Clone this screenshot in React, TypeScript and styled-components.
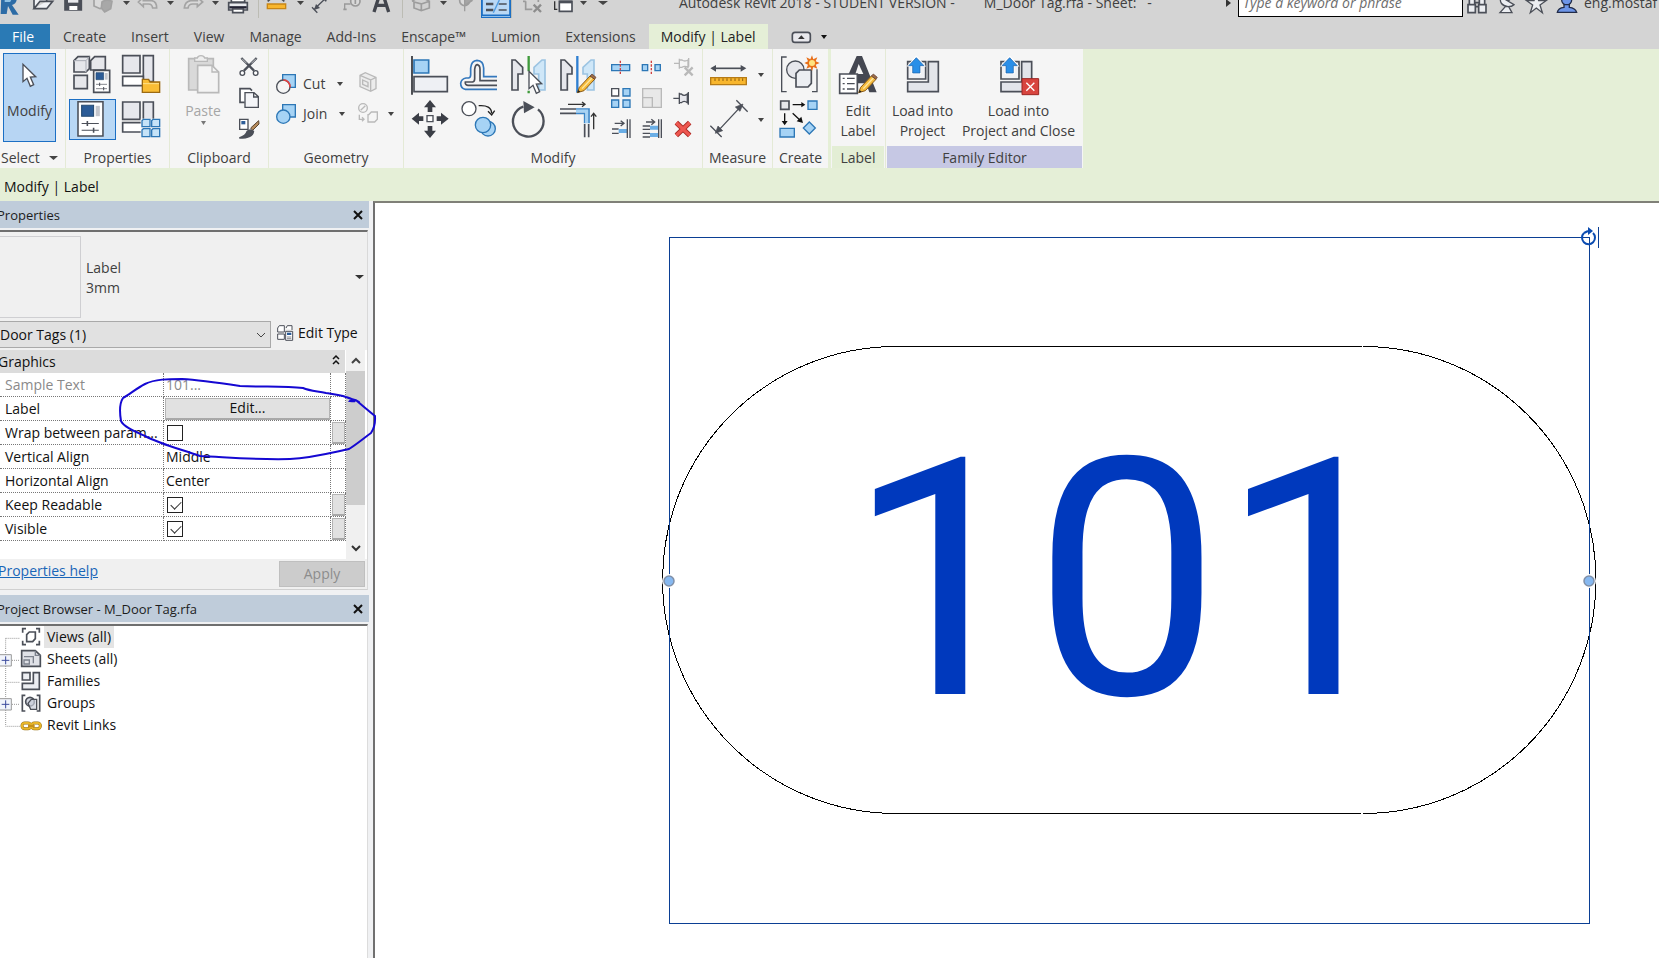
import React from "react";
import styled, { createGlobalStyle, css } from "styled-components";

const GlobalStyle = createGlobalStyle`
  * { box-sizing: border-box; }
  html, body { margin: 0; padding: 0; }
  body {
    font-family: "Open Sans", "Noto Sans", sans-serif;
    font-size: 14px;
    line-height: 20px;
    color: #404040;
    background: #f0f0f0;
    overflow: hidden;
  }
  button, input, select { font: inherit; color: inherit; margin: 0; }
`;

/* ---------- palette ---------- */
const green = "#e5efd7";
const ink = "#4b4f58";
const sky = "#a6d3f5";
const skyLine = "#2d77b6";
const pale = "#f2f3f6";
const faded = "#b9b9b9";

/* ---------- shell ---------- */
const Shell = styled.div`
  display: flex;
  flex-direction: column;
  height: 100vh;
  overflow: hidden;
`;

const TitleBar = styled.header`
  display: flex;
  height: 24px;
  background: #d4d4d4;
  overflow: hidden;
`;

const TitleRow = styled.div`
  display: flex;
  flex: 1;
  min-width: 0;
  height: 30px;
  margin-top: -12px;
  align-items: center;
`;

const TitleText = styled.h1`
  flex: 1;
  margin: 0;
  padding-left: 63px;
  font-size: 14px;
  font-weight: 400;
  white-space: pre;
  overflow: hidden;
`;

const Divider = styled.span`
  width: 1px;
  height: 30px;
  background: #bcbcb4;
`;

const SearchBox = styled.input`
  width: 225px;
  height: 29px;
  padding: 0 4px;
  border: 1px solid #000;
  background: #fff;
  font-style: italic;
  align-self: flex-start;
  &::placeholder { color: #6d6d6d; opacity: 1; }
`;

const UserName = styled.button`
  width: 76px;
  border: 0;
  padding: 0 0 0 1px;
  background: none;
  text-align: left;
  white-space: nowrap;
`;

const Tool = styled.button<{ $active?: boolean; $w?: number }>`
  display: flex;
  align-items: center;
  justify-content: center;
  border: 0;
  padding: 0;
  background: none;
  flex: none;
  ${(p) => p.$w && css`width: ${p.$w}px;`}
  ${(p) => p.$active && css`
    background: #b9d8f5;
    box-shadow: inset 0 0 0 1px #1c6fc4;
  `}
  svg { display: block; }
`;

const TabRow = styled.nav`
  display: flex;
  align-items: stretch;
  gap: 1px;
  height: 25px;
  background: #d4d4d4;
`;

const Tab = styled.button<{ $kind?: "file" | "active" }>`
  border: 0;
  padding: 0 12px;
  background: none;
  line-height: 24px;
  white-space: nowrap;
  ${(p) => p.$kind === "file" && css`
    width: 50px;
    padding: 0 4px 0 0;
    background: #2a7ab5;
    color: #fff;
  `}
  ${(p) => p.$kind === "active" && css`
    margin-right: 20px;
    background: ${green};
    color: #222;
  `}
`;

/* ---------- ribbon ---------- */
const Ribbon = styled.section`
  display: flex;
  height: 119px;
  background: ${green};
`;

const Panel = styled.div<{ $w: number; $first?: boolean; $gap?: number }>`
  display: flex;
  flex-direction: column;
  flex: none;
  width: ${(p) => p.$w}px;
  margin-left: ${(p) => p.$gap ?? 0}px;
  background: #f5f5f5;
  border-left: ${(p) => (p.$first ? "0" : "1px solid #e4ead6")};
`;

const PanelBody = styled.div<{ $pad?: number }>`
  display: flex;
  align-items: flex-start;
  gap: 4px;
  height: 97px;
  padding: 4px 0 0 ${(p) => p.$pad ?? 0}px;
`;

const PanelTitle = styled.div<{ $bg?: string; $start?: boolean }>`
  display: flex;
  align-items: center;
  justify-content: ${(p) => (p.$start ? "flex-start" : "center")};
  gap: 9px;
  height: 22px;
  margin: 0 1px;
  padding-top: 2px;
  background: ${(p) => p.$bg ?? "transparent"};
  white-space: nowrap;
`;

const ToolGrid = styled.div<{ $cols: string; $rows: string; $gap?: number }>`
  display: grid;
  grid-template-columns: ${(p) => p.$cols};
  grid-template-rows: ${(p) => p.$rows};
  gap: ${(p) => p.$gap ?? 0}px;
`;

const JoinedGrids = styled.div`
  display: flex;
`;

const BigButton = styled.button<{ $w: number; $active?: boolean; $faded?: boolean }>`
  display: flex;
  flex-direction: column;
  align-items: center;
  width: ${(p) => p.$w}px;
  height: 89px;
  flex: none;
  border: 0;
  padding: 0;
  background: ${(p) => (p.$active ? "#b7d5f3" : "none")};
  box-shadow: ${(p) => (p.$active ? "inset 0 0 0 1px #1c6fc4" : "none")};
  color: ${(p) => (p.$faded ? "#a6a6a6" : "inherit")};
  white-space: nowrap;
  text-align: center;
  svg { display: block; flex: none; }
  span { margin-top: 4px; }
`;

const GeometryRows = styled.div`
  padding-top: 16px;
`;

const GeometryRow = styled.div`
  display: grid;
  grid-template-columns: 81px 30px 15px;
  height: 30px;
`;

const TextTool = styled.button`
  display: flex;
  align-items: center;
  border: 0;
  padding: 0;
  background: none;
  svg:last-child { margin-left: 12px; }
  span { margin-left: 3px; }
`;

const OptionsBar = styled.div`
  height: 33px;
  padding: 9px 0 0 4px;
  background: ${green};
  color: #111;
`;

/* ---------- workspace ---------- */
const Workspace = styled.main`
  position: relative;
  display: flex;
  flex: 1;
  min-height: 0;
`;

const Side = styled.aside`
  display: flex;
  flex-direction: column;
  flex: none;
  width: 373px;
  padding-right: 4px;
  background: #f0f1f3;
`;

const DockHeader = styled.div`
  display: flex;
  align-items: center;
  justify-content: space-between;
  height: 27px;
  margin-bottom: 2px;
  padding-right: 5px;
  background: #bfccda;
  color: #1c1c1c;
  flex: none;
  h2 {
    margin: 0 0 0 -3px;
    font-size: 13px;
    font-weight: 400;
  }
`;

const PropertyDock = styled.section`
  display: flex;
  flex-direction: column;
  border-top: 2px solid #6f6f6f;
  border-right: 1px solid #d9d9d9;
  border-bottom: 1px solid #d0d0d0;
  background: #f0f0f0;
  margin-right: 1px;
  height: 360px;
  flex: none;
`;

const TypeRow = styled.div`
  display: flex;
  align-items: center;
  height: 87px;
  padding: 2px 3px 0 0;
`;

const Thumb = styled.div`
  width: 81px;
  height: 82px;
  border: 1px solid #cfcfd2;
  border-left: 0;
`;

const TypeName = styled.div`
  flex: 1;
  padding: 2px 0 0 5px;
`;

const FilterRow = styled.div`
  display: flex;
  align-items: center;
  height: 31px;
`;

const SelectWrap = styled.div`
  position: relative;
  width: 271px;
  svg { position: absolute; right: 4px; top: 8px; pointer-events: none; }
`;

const Filter = styled.select`
  appearance: none;
  width: 100%;
  height: 27px;
  padding: 0 0 0 0;
  border: 1px solid #a9a9a9;
  border-left: 0;
  border-radius: 0;
  background: #e1e1e1;
  color: #111;
`;

const EditType = styled.button`
  display: flex;
  align-items: center;
  gap: 4px;
  border: 0;
  padding: 0 0 4px 5px;
  background: none;
  color: #111;
  white-space: nowrap;
`;

const GridArea = styled.div`
  display: flex;
  height: 209px;
  background: #fff;
`;

const PropColumn = styled.div`
  flex: 1;
  min-width: 0;
`;

const GroupHeader = styled.div`
  display: flex;
  align-items: center;
  justify-content: space-between;
  height: 23px;
  padding-right: 5px;
  margin-right: 1px;
  background: #dcdcdc;
  color: #111;
  span { margin-left: -2px; }
`;

const PropTable = styled.table`
  width: 346px;
  table-layout: fixed;
  border-collapse: separate;
  border-spacing: 0;
  color: #111;
  th, td {
    height: 24px;
    padding: 0;
    border-bottom: 1px dotted #777;
    border-right: 1px dotted #777;
    font-weight: 400;
    text-align: left;
    line-height: 20px;
    white-space: nowrap;
    overflow: hidden;
  }
  th { width: 164px; padding-left: 5px; }
  td:last-child { width: 15px; padding: 1px 0 0 1px; }
`;

const Value = styled.td<{ $faded?: boolean }>`
  && { padding-left: 2px; }
  color: ${(p) => (p.$faded ? "#8a8a8a" : "inherit")};
`;

const NameCell = styled.th<{ $faded?: boolean }>`
  color: ${(p) => (p.$faded ? "#8a8a8a" : "inherit")};
`;

const FieldButton = styled.button<{ $wide?: boolean }>`
  display: block;
  width: ${(p) => (p.$wide ? "165px" : "13px")};
  height: 22px;
  margin-left: ${(p) => (p.$wide ? "-1px" : "0")};
  border: 1px solid #b4b4b4;
  border-bottom: 2px solid #a8a8a8;
  padding: 0;
  line-height: 18px;
  background: #e1e1e1;
`;

const Check = styled.input`
  appearance: none;
  display: block;
  width: 16px;
  height: 16px;
  margin-left: 1px;
  border: 1px solid #222;
  background: #fff;
  &:checked::after {
    content: "";
    display: block;
    width: 9px;
    height: 5px;
    margin: 3px 0 0 3px;
    border: solid #333;
    border-width: 0 0 1px 1px;
    transform: rotate(-45deg);
  }
`;

const ScrollTrack = styled.div`
  display: flex;
  flex-direction: column;
  align-items: center;
  width: 19px;
  margin-right: 2px;
  background: #f0f0f0;
`;

const ScrollThumb = styled.div`
  width: 100%;
  height: 134px;
  background: #cdcdcd;
  margin-bottom: auto;
`;

const Footer = styled.div`
  display: flex;
  justify-content: space-between;
  align-items: flex-start;
  padding: 2px 2px 0 0;
  a { margin-left: -2px; color: #1a66b8; }
`;

const Apply = styled.button`
  width: 86px;
  height: 26px;
  border: 1px solid #bfbfbf;
  padding: 0;
  background: #cccccc;
  color: #8c8c8c;
`;

const Tree = styled.ul`
  flex: 1;
  margin: 0 1px 0 0;
  padding: 0;
  border-top: 2px solid #6f6f6f;
  border-right: 1px solid #dcdcdc;
  background: #fff;
  list-style: none;
  color: #111;
`;

const TreeItem = styled.li<{ $selected?: boolean }>`
  display: flex;
  height: 22px;
  line-height: 22px;
  span {
    padding: 0 3px;
    background: ${(p) => (p.$selected ? "#e4e4e4" : "none")};
  }
`;

const Canvas = styled.section`
  flex: 1;
  min-width: 0;
  border-left: 2px solid #707070;
  border-top: 2px solid #808078;
  background: #fff;
  svg { display: block; width: 100%; height: 100%; }
`;

/* hand-drawn mark laid over the property grid */
const InkMark = styled.svg`
  position: absolute;
  left: 116px;
  top: 173px;
  pointer-events: none;
`;

/* ---------- small drawings ---------- */
function Glyph({ w, h, box, children }: { w: number; h: number; box: string; children: React.ReactNode }) {
  return (
    <svg width={w} height={h} viewBox={box} fill="none" stroke={ink} strokeWidth={5} aria-hidden="true">
      {children}
    </svg>
  );
}

function Arrow({ w = 7, color = "#444" }: { w?: number; color?: string }) {
  return (
    <svg width={w} height={4} viewBox="0 0 8 4" preserveAspectRatio="none" aria-hidden="true">
      <path d="M0 0H8L4 4Z" fill={color} />
    </svg>
  );
}

function Close() {
  return (
    <svg width="12" height="12" viewBox="0 0 12 12" aria-hidden="true">
      <path d="M2 2L10 10M10 2L2 10" stroke="#111" strokeWidth="2" fill="none" />
    </svg>
  );
}

function QuickIcon({ label, x, w, active, children }: { label: string; x: number; w: number; active?: boolean; children: React.ReactNode }) {
  return (
    <Tool aria-label={label} $w={w} $active={active}>
      <Glyph w={w} h={30} box={`${x} -36 ${w * 3} 90`}>{children}</Glyph>
    </Tool>
  );
}

function QuickArrow({ w, label }: { w: number; label: string }) {
  return (
    <Tool aria-label={label} $w={w}><Arrow /></Tool>
  );
}

function QuickAccess() {
  return (
    <>
      <QuickIcon label="Application menu" x={0} w={26}>
        <path d="M4 -20H36Q52 -18 50 0Q48 12 36 15L56 44H38L24 18L20 42H2Z" fill="#2d6ca6" stroke="none" />
        <path d="M14 -6H32Q36 0 30 6H14Z" fill="#8fc1e4" stroke="none" />
      </QuickIcon>
      <QuickIcon label="Open" x={78} w={32}>
        <path d="M102 26V-8H140V4M102 26H140L158 4H120Z" fill={pale} />
      </QuickIcon>
      <QuickIcon label="Save" x={174} w={30}>
        <path d="M195 -15H244V30H195Z" fill={ink} />
        <path d="M204 -12H235V8H204Z" fill="#e9eaee" stroke="none" />
        <path d="M208 18H232V30H208Z" fill="#fff" stroke="none" />
      </QuickIcon>
      <QuickIcon label="Synchronize" x={264} w={31}>
        <g stroke="#a2a2a2" fill="#dadada">
          <path d="M282 -14H316V22L300 26L282 18Z" />
          <path d="M306 6Q320 -4 336 4L332 26L314 36L304 24Z" fill="#a8a8a8" />
        </g>
      </QuickIcon>
      <QuickArrow w={14} label="Synchronize options" />
      <QuickIcon label="Undo" x={399} w={30}>
        <path d="M415 6L430 -8V2H455Q470 4 470 24H458Q456 12 446 12H430V20Z" stroke="#a4a4a4" fill="#d9d9d9" />
      </QuickIcon>
      <QuickArrow w={15} label="Undo history" />
      <QuickIcon label="Redo" x={534} w={30}>
        <path d="M608 6L592 -8V2H572Q555 4 553 24H564Q566 12 578 12H592V20Z" stroke="#a4a4a4" fill="#d9d9d9" />
      </QuickIcon>
      <QuickArrow w={14} label="Redo history" />
      <QuickIcon label="Print" x={666} w={36}>
        <path d="M686 8H742V30H686Z" fill="#e8eaee" />
        <path d="M694 -12H734V6H694Z" fill="#fff" />
        <path d="M698 27H730V38H698Z" fill="#fff" />
        <path d="M688 22H740" stroke="#223" strokeWidth={7} />
      </QuickIcon>
      <Divider />
      <QuickIcon label="Measure" x={777} w={34}>
        <path d="M802 -2H854" strokeWidth={4} />
        <path d="M803 -8L810 -2L803 4M853 -8L846 -2L853 4" />
        <path d="M802 12H857V26H802Z" fill="#f8b62d" stroke="#c88617" strokeWidth={4} />
      </QuickIcon>
      <QuickArrow w={14} label="Measure options" />
      <QuickIcon label="Aligned dimension" x={921} w={27}>
        <path d="M944 26L980 -8M936 22L952 38" strokeWidth={4} />
        <path d="M942 30L960 24L948 12ZM984 -10L968 -4L978 6Z" fill={ink} stroke="none" />
      </QuickIcon>
      <QuickIcon label="Tag" x={1002} w={32}>
        <path d="M1034 28V12H1052" stroke="#999" strokeWidth={4} />
        <circle cx="1066" cy="4" r="14" stroke="#999" fill="#d9d9d9" />
        <path d="M1066 -4V12M1030 28H1040" stroke="#999" />
      </QuickIcon>
      <QuickIcon label="Text" x={1098} w={36}>
        <path d="M1122 36L1140 -20H1148L1166 36M1130 16H1158" strokeWidth={10} stroke="#42454d" />
      </QuickIcon>
      <Divider />
      <QuickIcon label="3D view" x={9} w={33}>
        <path d="M36 4L60 -12L88 4V24L64 32L42 24V6L64 12V32M64 12L88 4" stroke="#9d9d9d" fill="#d0d0d0" />
      </QuickIcon>
      <QuickArrow w={15} label="3D options" />
      <QuickIcon label="Section" x={153} w={30}>
        <circle cx="194" cy="2" r="15" stroke="#9d9d9d" fill="#dadada" />
        <path d="M194 -12L216 2L194 16ZM194 16V34" stroke="#9d9d9d" fill="#a5a5a5" strokeWidth={4} />
      </QuickIcon>
      <QuickIcon label="Thin lines" x={243} w={30} active>
        <path d="M258 12H280M258 30H280" strokeWidth={7} />
        <path d="M296 12H320M296 30H320" strokeWidth={4} />
        <path d="M280 38L298 0" stroke="#4e9be0" strokeWidth={4} />
        <path d="M246 -30H330V46H246Z" stroke="#1c6fc4" />
      </QuickIcon>
      <Divider />
      <QuickIcon label="Close hidden windows" x={345} w={32}>
        <path d="M386 -4H424V6M386 4V28H406M378 4H386" stroke="#9a9a9a" />
        <path d="M410 14L432 36M432 14L410 36" stroke="#8d8d8d" strokeWidth={7} />
      </QuickIcon>
      <QuickIcon label="Switch windows" x={438} w={32}>
        <path d="M484 4H522V34H484Z" fill="#fff" />
        <path d="M484 6H522" strokeWidth={8} />
        <path d="M470 4V28H478M474 -8H516" stroke="#333" strokeWidth={4} />
      </QuickIcon>
      <QuickArrow w={14} label="Window list" />
      <Tool aria-label="Customize toolbar" $w={26}><Arrow w={10} /></Tool>
    </>
  );
}

function SearchIcons() {
  return (
    <>
      <QuickIcon label="Search" x={849} w={33}>
        <path d="M864 14H886V38H864ZM896 14H918V38H896ZM868 14V-8H884V14M898 14V-8H914V14M886 8H896M886 20H896" fill="#eceef2" />
      </QuickIcon>
      <QuickIcon label="Communication center" x={948} w={27}>
        <path d="M962 -10Q956 16 984 20Q996 20 1002 14ZM976 20L960 38H996L986 20M984 4L998 -10" fill="#eceef2" strokeWidth={4} />
      </QuickIcon>
      <QuickIcon label="Favorites" x={1029} w={28}>
        <path d="M1069 -20L1076 2H1098L1080 15L1087 38L1069 24L1051 38L1058 15L1040 2H1062Z" fill="#eceef2" strokeWidth={4} />
      </QuickIcon>
      <QuickIcon label="Sign in" x={1113} w={32}>
        <circle cx="1160" cy="0" r="15" fill="#6d95e8" strokeWidth={4} stroke="#222c48" />
        <path d="M1132 37Q1134 24 1152 22V14H1168V22Q1186 24 1190 37Z" fill="#6d95e8" strokeWidth={4} stroke="#222c48" />
      </QuickIcon>
    </>
  );
}

/* pieces shared by several ribbon icons */
const PropertyCard = ({ x, y, s = 1 }: { x: number; y: number; s?: number }) => (
  <g transform={`translate(${x} ${y}) scale(${s})`}>
    <path d="M0 0H48V66H0Z" fill="#fff" strokeWidth={s > 1 ? 3 : 5} />
    <path d="M7 7H30V28H7Z" fill="#2c5c97" stroke="#24496f" strokeWidth={2} />
    <path d="M34 8H42V28H34Z" fill="#c4c6cc" stroke="none" />
    <path d="M7 42H40M7 55H40" strokeWidth={2} />
    <path d="M18 37V47M30 50V60" strokeWidth={3} />
  </g>
);

const FamilyBlocks = ({ x, y }: { x: number; y: number }) => (
  <g transform={`translate(${x} ${y})`} fill="#e6e7ec">
    <path d="M0 0H52V52H0Z" />
    <path d="M62 0H92V78H62Z" />
    <path d="M0 62H62V90H0Z" fill="#fff" />
  </g>
);

const Pencil = ({ x, y }: { x: number; y: number }) => (
  <g transform={`translate(${x} ${y})`}>
    <path d="M0 54L6 38L38 4L52 14L20 48Z" fill="#f6bb3c" stroke="#8a5a18" strokeWidth={3} />
    <path d="M38 4L44 -2L56 8L52 14Z" fill="#9b6b4a" stroke="#5b3a2a" strokeWidth={2} />
    <path d="M0 54L3 46L9 51Z" fill="#222" stroke="none" />
    <path d="M14 42L44 10" stroke="#fde7a3" strokeWidth={4} />
  </g>
);

const Cursor = ({ x, y }: { x: number; y: number }) => (
  <path transform={`translate(${x} ${y})`} d="M0 0V52L12 42L22 66L32 61L22 38L38 37Z" fill="#fff" strokeWidth={4} />
);

function SelectPanel() {
  return (
    <Panel $w={65} $first>
      <PanelBody $pad={3}>
        <BigButton $w={53} $active>
          <Glyph w={53} h={44} box="9 159 159 132"><Cursor x={69} y={193} /></Glyph>
          <span>Modify</span>
        </BigButton>
      </PanelBody>
      <PanelTitle $start>Select <Arrow w={9} /></PanelTitle>
    </Panel>
  );
}

function PropertiesPanel() {
  return (
    <Panel $w={104}>
      <PanelBody $pad={3}>
        <ToolGrid $cols="47px 47px" $rows="44px 41px" $gap={2}>
          <Tool aria-label="Type properties">
            <Glyph w={47} h={44} box="207 159 141 132">
              <g fill="#e6e7eb">
                <path d="M222 182L234 170H268V206L258 216H222Z" />
                <path d="M222 182H258V216M258 182L268 170" strokeWidth={3} stroke="#a9acb5" />
                <path d="M272 182L284 170H316V210H272Z" />
                <path d="M222 226H262V266H222Z" />
              </g>
              <PropertyCard x={281} y={211} />
            </Glyph>
          </Tool>
          <Tool aria-label="Family category and parameters">
            <Glyph w={47} h={44} box="354 159 141 132">
              <FamilyBlocks x={368} y={167} />
              <path d="M427 238H446L450 246H479V277H427Z" fill="#f9bd35" stroke="#9b6a12" strokeWidth={4} />
              <path d="M429 251H477" stroke="#fde08a" strokeWidth={3} />
            </Glyph>
          </Tool>
          <Tool aria-label="Properties" $active>
            <Glyph w={47} h={41} box="207 297 141 123"><PropertyCard x={234} y={305} s={1.56} /></Glyph>
          </Tool>
          <Tool aria-label="Family types">
            <Glyph w={47} h={41} box="354 297 141 123">
              <FamilyBlocks x={368} y={306} />
              <path d="M422 356H482V416H422Z" fill="#f5f5f5" stroke="none" />
              <g fill="#c5e3f8" stroke={skyLine} strokeWidth={4}>
                <path d="M426 362L430 358H450V380H426ZM455 362L459 358H479V380H455ZM426 390L430 386H450V410H426ZM455 390L459 386H479V410H455Z" />
              </g>
            </Glyph>
          </Tool>
        </ToolGrid>
      </PanelBody>
      <PanelTitle>Properties</PanelTitle>
    </Panel>
  );
}

function ClipboardPanel() {
  return (
    <Panel $w={99}>
      <PanelBody $pad={6}>
        <BigButton $w={54} $faded>
          <Glyph w={54} h={44} box="528 159 162 132">
            <g stroke={faded}>
              <path d="M566 176H640V270H566Z" fill="#d9d9d9" />
              <path d="M584 184V174H592Q594 167 603 167Q612 167 614 174H622V184Z" fill="#eee" strokeWidth={4} />
              <path d="M593 196H636L656 216V278H593Z" fill="#f4f4f4" />
              <path d="M636 196V216H656" strokeWidth={4} />
            </g>
          </Glyph>
          <span>Paste</span>
          <Arrow w={5} color="#777" />
        </BigButton>
        <ToolGrid $cols="30px" $rows="30px 30px 30px">
          <Tool aria-label="Cut to clipboard">
            <Glyph w={30} h={30} box="702 159 90 90">
              <path d="M724 174L762 212M770 174L732 212" strokeWidth={7} />
              <circle cx="727" cy="219" r="7" fill="#fff" strokeWidth={4} />
              <circle cx="767" cy="219" r="7" fill="#fff" strokeWidth={4} />
              <path d="M726 176L740 190M768 176L754 190" stroke="#fff" strokeWidth={2} />
            </Glyph>
          </Tool>
          <Tool aria-label="Copy to clipboard">
            <Glyph w={30} h={30} box="702 249 90 90">
              <path d="M734 307H720V266H750L756 272" fill="#fff" />
              <path d="M735 278H762L775 290V322H735ZM761 278V291H775" fill="#f4f5f8" strokeWidth={4} />
            </Glyph>
          </Tool>
          <Tool aria-label="Match type properties">
            <Glyph w={30} h={30} box="702 339 90 90">
              <path d="M719 358H744V388H719Z" fill="#fff" strokeWidth={4} />
              <path d="M724 363H736V373H724Z" fill="#2c5c97" stroke="none" />
              <path d="M776 362L752 384L758 391L777 372Z" fill="#b58a5a" stroke="#5a4430" strokeWidth={3} />
              <path d="M718 414Q738 408 742 394Q750 386 760 394Q758 414 718 414Z" fill={ink} />
            </Glyph>
          </Tool>
        </ToolGrid>
      </PanelBody>
      <PanelTitle>Clipboard</PanelTitle>
    </Panel>
  );
}

function GeometryPanel() {
  return (
    <Panel $w={135}>
      <PanelBody $pad={3}>
        <GeometryRows>
          <GeometryRow>
            <TextTool>
              <Glyph w={28} h={30} box="816 207 84 90">
                <path d="M848 224H886V262H848Z" fill={sky} stroke={skyLine} strokeWidth={4} />
                <circle cx="850" cy="260" r="20" fill="#f5f5f5" strokeWidth={4} />
                <path d="M850 240A20 20 0 0 1 870 262" stroke="#e04343" strokeWidth={5} />
              </Glyph>
              <span>Cut</span>
              <Arrow w={6} />
            </TextTool>
            <Tool aria-label="Cope">
              <Glyph w={30} h={30} box="1059 207 90 90">
                <path d="M1080 226L1096 218L1128 232V266L1112 274L1080 260ZM1080 226L1112 240V274M1112 240L1128 232" stroke={faded} fill="#ececec" strokeWidth={4} />
                <path d="M1088 240L1104 247V260L1088 253Z" stroke={faded} strokeWidth={4} />
              </Glyph>
            </Tool>
          </GeometryRow>
          <GeometryRow>
            <TextTool>
              <Glyph w={28} h={30} box="816 297 84 90">
                <path d="M848 314H886V351H848Z" fill={sky} stroke={skyLine} strokeWidth={4} />
                <circle cx="850" cy="350" r="20" fill={sky} stroke={skyLine} strokeWidth={4} />
                <path d="M851 333V348H866" stroke={sky} strokeWidth={5} />
              </Glyph>
              <span>Join</span>
              <Arrow w={6} />
            </TextTool>
            <Tool aria-label="Split face">
              <Glyph w={30} h={30} box="1059 297 90 90">
                <g stroke={faded} strokeWidth={4}>
                  <circle cx="1089" cy="324" r="13" />
                  <path d="M1082 331L1096 317M1106 344L1114 336H1132V358L1124 366H1104V344ZM1078 344V358H1090M1086 352L1092 358L1086 364" />
                </g>
              </Glyph>
            </Tool>
            <Tool aria-label="Paint options"><Arrow w={6} /></Tool>
          </GeometryRow>
        </GeometryRows>
      </PanelBody>
      <PanelTitle>Geometry</PanelTitle>
    </Panel>
  );
}

const modifyTools: { label: string; art: React.ReactNode }[] = [
  {
    label: "Align",
    art: (
      <>
        <path d="M36 168V284" stroke="#2b2d33" />
        <path d="M42 180H86V219H42Z" fill={sky} stroke={skyLine} />
        <path d="M42 230H142V275H42Z" fill="#eef0f4" />
      </>
    ),
  },
  {
    label: "Offset",
    art: (
      <>
        <path d="M291 268H196Q182 266 182 250Q184 236 198 234H206Q212 232 212 224V204Q214 182 231 181Q250 182 251 204V230H291" stroke="#3478bd" strokeWidth={5} />
        <path d="M291 256H204Q194 254 196 246H218Q224 244 224 236V208Q226 194 232 194Q240 196 240 208V242H291" />
      </>
    ),
  },
  {
    label: "Mirror - Pick axis",
    art: (
      <>
        <path d="M336 180H346L368 202V222H354V270H336Z" fill="#e6e7ec" />
        <path d="M435 180H426L402 202V222H416V270H435Z" fill="#cfe7f8" stroke="#9cc4e2" />
        <path d="M386 168V214M386 272V280" stroke="#3f9a3b" strokeWidth={7} />
        <Cursor x={387} y={214} />
      </>
    ),
  },
  {
    label: "Mirror - Draw axis",
    art: (
      <>
        <path d="M483 180H494L516 202V222H502V270H483Z" fill="#e6e7ec" />
        <path d="M582 180H573L549 202V222H562V270H582Z" fill="#cfe7f8" stroke="#9cc4e2" />
        <path d="M532 168V278" stroke="#2f7fd1" strokeWidth={7} />
        <Pencil x={532} y={224} />
      </>
    ),
  },
  {
    label: "Move",
    art: (
      <>
        <path d="M90 300L108 322H97V336H83V322H72ZM90 414L72 392H83V378H97V392H108ZM35 356L57 338V349H70V363H57V374ZM146 356L123 338V349H110V363H123V374Z" fill="#3b3e46" stroke="none" />
        <path d="M81 347H99V365H81Z" fill="#fff" strokeWidth={4} />
      </>
    ),
  },
  {
    label: "Copy",
    art: (
      <>
        <circle cx="207" cy="326" r="21" fill="#fff" strokeWidth={4} />
        <path d="M236 317Q274 314 275 340M264 334L275 345L284 332" stroke="#222" strokeWidth={4} />
        <circle cx="264" cy="386" r="22" fill={sky} stroke={skyLine} strokeWidth={4} />
        <circle cx="249" cy="375" r="23" fill={sky} stroke={skyLine} strokeWidth={4} />
      </>
    ),
  },
  {
    label: "Rotate",
    art: (
      <>
        <path d="M414 328A46 46 0 1 1 370 320" strokeWidth={7} />
        <path d="M370 303L404 322L372 340Z" fill={ink} stroke="none" />
      </>
    ),
  },
  {
    label: "Trim/Extend to corner",
    art: (
      <>
        <path d="M480 327H528M480 340H528M554 372V412M566 372V412" />
        <path d="M528 327H567V370M528 340H554V370" stroke="#3d87c9" />
        <path d="M528 333H560V370" stroke={sky} strokeWidth={8} />
        <path d="M504 313H554M546 306L555 313L546 320M581 388V340M573 350L581 340L589 350" stroke="#333" strokeWidth={4} />
      </>
    ),
  },
];

const editTools: { label: string; art: React.ReactNode }[] = [
  {
    label: "Split element",
    art: (
      <>
        <path d="M635 194H689V212H635Z" fill={sky} stroke={skyLine} strokeWidth={4} />
        <path d="M661 182V224" stroke="#d04040" strokeWidth={4} strokeDasharray="7 4" />
      </>
    ),
  },
  {
    label: "Split with gap",
    art: (
      <>
        <path d="M727 194H743V212H727ZM765 194H781V212H765Z" fill={sky} stroke={skyLine} strokeWidth={4} />
        <path d="M754 182V224" stroke="#d04040" strokeWidth={4} strokeDasharray="7 4" />
      </>
    ),
  },
  {
    label: "Unpin",
    art: (
      <>
        <path d="M822 190H838M838 176V206M838 180H846Q854 186 864 180V202Q854 196 846 202H838M866 174V200" stroke={faded} strokeWidth={4} />
        <path d="M854 202L878 226M878 202L854 226" stroke={faded} strokeWidth={7} />
      </>
    ),
  },
  {
    label: "Array",
    art: (
      <>
        <path d="M635 266H656V288H635Z" fill="#fff" strokeWidth={4} />
        <path d="M669 266H690V288H669ZM635 300H656V322H635ZM669 300H690V322H669Z" fill={sky} stroke={skyLine} strokeWidth={4} />
      </>
    ),
  },
  {
    label: "Scale",
    art: (
      <path d="M728 266H784V322H728ZM728 293H757V322" stroke={faded} fill="#e8e8e8" strokeWidth={4} />
    ),
  },
  {
    label: "Pin",
    art: (
      <path d="M820 295H838M838 278V312M838 282H844Q852 290 862 282V308Q852 300 844 308H838M865 276V314" fill="#e6e7ec" strokeWidth={4} />
    ),
  },
  {
    label: "Trim/Extend single",
    art: (
      <>
        <path d="M636 387H656M636 400H656" strokeWidth={4} />
        <path d="M656 393H682" stroke="#6aaee6" strokeWidth={12} />
        <path d="M682 358V414M690 358V414M644 370H670M662 362L672 370L662 378" strokeWidth={4} />
      </>
    ),
  },
  {
    label: "Trim/Extend multiple",
    art: (
      <>
        <path d="M728 378H750M728 388H750M728 400H750M728 411H750" strokeWidth={4} />
        <path d="M750 383H774M750 405H774" stroke="#6aaee6" strokeWidth={12} />
        <path d="M776 358V414M784 358V414M738 366H762M754 358L764 366L754 374" strokeWidth={4} />
      </>
    ),
  },
  {
    label: "Delete",
    art: (
      <>
        <path d="M829 368L869 406M869 368L829 406" stroke="#a92b25" strokeWidth={15} />
        <path d="M829 368L869 406M869 368L829 406" stroke="#ee5750" strokeWidth={10} />
      </>
    ),
  },
];

function ModifyPanel() {
  return (
    <Panel $w={299}>
      <PanelBody>
        <JoinedGrids>
          <ToolGrid $cols="repeat(4, 50px)" $rows="44px 45px">
            {modifyTools.map((t, i) => {
              const low = i > 3;
              return (
                <Tool key={t.label} aria-label={t.label}>
                  <Glyph w={50} h={low ? 45 : 44} box={`${12 + 150 * (i % 4)} ${low ? 291 : 159} 150 ${low ? 135 : 132}`}>
                    {t.art}
                  </Glyph>
                </Tool>
              );
            })}
          </ToolGrid>
          <ToolGrid $cols="repeat(3, 31px)" $rows="repeat(3, 30px)">
            {editTools.map((t, i) => (
              <Tool key={t.label} aria-label={t.label}>
                <Glyph w={31} h={30} box={`${612 + 93 * (i % 3)} ${159 + 90 * Math.floor(i / 3)} 93 90`}>{t.art}</Glyph>
              </Tool>
            ))}
          </ToolGrid>
        </JoinedGrids>
      </PanelBody>
      <PanelTitle>Modify</PanelTitle>
    </Panel>
  );
}

function MeasurePanel() {
  return (
    <Panel $w={70}>
      <PanelBody>
        <ToolGrid $cols="49px 17px" $rows="44px 45px">
          <Tool aria-label="Measure between two references">
            <Glyph w={49} h={44} box="909 159 147 132">
              <path d="M940 205H1030" />
              <path d="M931 205L948 195V215ZM1039 205L1022 195V215Z" fill={ink} stroke="none" />
              <path d="M932 233H1039V254H932Z" fill="#f8b62d" stroke="#b67b16" strokeWidth={4} />
              <path d="M945 235V243M957 235V243M969 235V243M981 235V243M993 235V243M1005 235V243M1017 235V243M1028 235V243" stroke="#8f5f0e" strokeWidth={3} />
            </Glyph>
          </Tool>
          <Tool aria-label="Measure options"><Arrow w={6} /></Tool>
          <Tool aria-label="Aligned dimension tool">
            <Glyph w={49} h={45} box="909 291 147 135">
              <path d="M955 392L1020 322M931 377L965 411M1009 301L1043 335" strokeWidth={4} />
              <path d="M946 400L954 378L968 392ZM1029 312L1020 334L1006 321Z" fill={ink} stroke={ink} strokeWidth={2} />
            </Glyph>
          </Tool>
          <Tool aria-label="Dimension options"><Arrow w={6} /></Tool>
        </ToolGrid>
      </PanelBody>
      <PanelTitle>Measure</PanelTitle>
    </Panel>
  );
}

function CreatePanel() {
  return (
    <Panel $w={56}>
      <PanelBody>
        <ToolGrid $cols="55px" $rows="44px 45px">
          <Tool aria-label="Create group">
            <Glyph w={55} h={44} box="-21 159 165 132">
              <path d="M20 171H5V275H20M96 275H111V208" strokeWidth={4} />
              <circle cx="46" cy="209" r="26" fill="#e6e7ec" strokeWidth={4} />
              <path d="M48 220L58 210H94V250L84 261H48Z" fill="#eceef2" strokeWidth={5} />
              <path d="M96 166L100 178L112 172L107 184L119 189L107 194L112 206L100 201L96 213L91 201L79 206L84 194L73 189L84 184L79 172L91 178Z" fill="#e8701a" stroke="none" />
              <circle cx="96" cy="189" r="9" fill="#ffe480" stroke="none" />
            </Glyph>
          </Tool>
          <Tool aria-label="Create similar">
            <Glyph w={55} h={45} box="-21 291 165 135">
              <path d="M2 303H27V328H2Z" fill="#e6e7ec" />
              <path d="M84 303H111V328H84ZM0 385H43V411H0ZM88 366L106 384L88 402L70 384Z" fill={sky} stroke={skyLine} strokeWidth={4} />
              <path d="M38 314H66M14 340V366M38 340L62 362" stroke="#111" strokeWidth={4} />
              <path d="M76 314L64 306V322ZM14 376L5 363H23ZM69 369L50 364L64 350Z" fill="#111" stroke="none" />
            </Glyph>
          </Tool>
        </ToolGrid>
      </PanelBody>
      <PanelTitle>Create</PanelTitle>
    </Panel>
  );
}

function LabelPanel() {
  return (
    <Panel $w={54} $gap={3} $first>
      <PanelBody>
        <BigButton $w={54}>
          <Glyph w={54} h={44} box="153 159 162 132">
            <path d="M206 222L230 168H246L290 277H268L258 250H222Z" fill="#444751" stroke="none" />
            <path d="M236 192L226 222H250Z" fill="#f5f5f5" stroke="none" />
            <path d="M179 222H232V280H179Z" fill="#fff" />
            <path d="M188 235H194M188 251H194M188 267H194M201 235H224M201 251H224M201 267H224" strokeWidth={4} />
            <Pencil x={236} y={224} />
          </Glyph>
          <span>Edit<br />Label</span>
        </BigButton>
      </PanelBody>
      <PanelTitle $bg="#e3eed5">Label</PanelTitle>
    </Panel>
  );
}

const LoadShape = ({ x }: { x: number }) => (
  <g transform={`translate(${x} 0)`}>
    <path d="M0 185H54V237H0Z" fill="#f0f1f4" />
    <path d="M62 185H92V275H0V246H62Z" fill="#e3e5ea" />
    <path d="M26 170L50 197H38V220H14V197H2Z" fill="#1e8be8" stroke="#fff" strokeWidth={5} />
    <path d="M26 173L49 197H37V219H15V197H3Z" fill="#2a8fe8" stroke="#1b5fa8" strokeWidth={2} />
  </g>
);

function FamilyPanel() {
  return (
    <Panel $w={198}>
      <PanelBody $pad={2}>
        <JoinedGrids>
          <BigButton $w={69}>
            <Glyph w={44} h={44} box="361 159 132 132"><LoadShape x={381} /></Glyph>
            <span>Load into<br />Project</span>
          </BigButton>
          <BigButton $w={123}>
            <Glyph w={44} h={44} box="649 159 132 132">
              <LoadShape x={661} />
              <path d="M724 236H774V284H724Z" fill="#d8453f" stroke="#9c2420" strokeWidth={3} />
              <path d="M737 248L761 272M761 248L737 272" stroke="#fff" strokeWidth={4} />
            </Glyph>
            <span>Load into<br />Project and Close</span>
          </BigButton>
        </JoinedGrids>
      </PanelBody>
      <PanelTitle $bg="#c6c8e4">Family Editor</PanelTitle>
    </Panel>
  );
}

/* ---------- property grid ---------- */
type Row = { name: string; kind: "text" | "edit" | "check"; value?: string; checked?: boolean; faded?: boolean };

const rows: Row[] = [
  { name: "Sample Text", kind: "text", value: "101...", faded: true },
  { name: "Label", kind: "edit", value: "Edit..." },
  { name: "Wrap between param...", kind: "check", checked: false },
  { name: "Vertical Align", kind: "text", value: "Middle" },
  { name: "Horizontal Align", kind: "text", value: "Center" },
  { name: "Keep Readable", kind: "check", checked: true },
  { name: "Visible", kind: "check", checked: true },
];

function PropertyRow({ row }: { row: Row }) {
  const id = `prop-${row.name.replace(/\W+/g, "-").toLowerCase()}`;
  return (
    <tr>
      <NameCell scope="row" $faded={row.faded}>
        {row.kind === "check" ? <label htmlFor={id}>{row.name}</label> : row.name}
      </NameCell>
      <Value $faded={row.faded}>
        {row.kind === "text" && row.value}
        {row.kind === "edit" && <FieldButton $wide>{row.value}</FieldButton>}
        {row.kind === "check" && <Check id={id} type="checkbox" defaultChecked={row.checked} />}
      </Value>
      <td>{row.kind === "check" && <FieldButton aria-label={`Associate ${row.name}`} />}</td>
    </tr>
  );
}

function PropertiesDock() {
  return (
    <>
      <DockHeader>
        <h2>Properties</h2>
        <Tool aria-label="Close properties"><Close /></Tool>
      </DockHeader>
      <PropertyDock>
        <TypeRow>
          <Thumb />
          <TypeName>Label<br />3mm</TypeName>
          <Tool aria-label="Choose type"><Arrow w={9} color="#333" /></Tool>
        </TypeRow>
        <FilterRow>
          <SelectWrap>
            <Filter aria-label="Element filter"><option>Door Tags (1)</option></Filter>
            <svg width="12" height="12" viewBox="0 0 12 12" aria-hidden="true">
              <path d="M2 4L6 8L10 4" fill="none" stroke="#444" />
            </svg>
          </SelectWrap>
          <EditType>
            <Glyph w={18} h={18} box="828 372 54 54">
              <path d="M833 384L838 377H853V396H833ZM858 384L862 377H876V390M833 402H853V418H833Z" fill="#fff" strokeWidth={3} />
              <path d="M857 394H878V421H857Z" fill="#fff" strokeWidth={3} />
              <path d="M861 398H874V405H861Z" fill="#2c5c97" stroke="none" />
              <path d="M861 411H874M861 416H874" strokeWidth={2} />
            </Glyph>
            Edit Type
          </EditType>
        </FilterRow>
        <GridArea>
          <PropColumn>
            <GroupHeader>
              <span>Graphics</span>
              <svg width="9" height="16" viewBox="0 0 9 16" aria-hidden="true">
                <path d="M2 5L5 2L8 5M2 10L5 7L8 10" fill="none" stroke="#111" strokeWidth="1.5" />
              </svg>
            </GroupHeader>
            <PropTable>
              <tbody>
                {rows.map((r) => <PropertyRow key={r.name} row={r} />)}
              </tbody>
            </PropTable>
          </PropColumn>
          <ScrollTrack>
            <svg width="12" height="21" viewBox="0 0 12 21" aria-hidden="true">
              <path d="M2 13L6 9L10 13" fill="none" stroke="#444" strokeWidth="2" />
            </svg>
            <ScrollThumb />
            <svg width="12" height="21" viewBox="0 0 12 21" aria-hidden="true">
              <path d="M2 8L6 12L10 8" fill="none" stroke="#333" strokeWidth="2" />
            </svg>
          </ScrollTrack>
        </GridArea>
        <Footer>
          <a href="#help">Properties help</a>
          <Apply disabled>Apply</Apply>
        </Footer>
      </PropertyDock>
    </>
  );
}

/* ---------- project browser ---------- */
const Expander = ({ y }: { y: number }) => (
  <>
    <path d={`M-2 ${y - 17}H34V${y + 17}H-2Z`} fill="#f1f4fb" stroke="#9a9a9a" strokeWidth={3} />
    <path d={`M5 ${y}H28M17 ${y - 12}V${y + 12}`} stroke="#3b4a9c" strokeWidth={3} />
  </>
);

const guide = { stroke: "#999", strokeWidth: 3, strokeDasharray: "3 3" };

const treeItems: { name: string; selected?: boolean; art: React.ReactNode }[] = [
  {
    name: "Views (all)",
    selected: true,
    art: (
      <>
        <path d="M17 145V174M17 145H60" {...guide} />
        <path d="M78 116H68V128M108 116H118V128M68 152V164H78M118 152V164H108" />
        <path d="M80 134L88 126H106V146L98 155H80Z" />
      </>
    ),
  },
  {
    name: "Sheets (all)",
    art: (
      <>
        <path d="M17 174V240M36 211H60" {...guide} />
        <Expander y={211} />
        <path d="M65 182H106L121 196V229H65Z" fill="#dfe1e7" />
        <path d="M106 182V196H121M72 200H100V220M72 210H88V222H72Z" strokeWidth={4} stroke="#7d828e" />
      </>
    ),
  },
  {
    name: "Families",
    art: (
      <>
        <path d="M17 240V306M17 277H60" {...guide} />
        <path d="M67 248H90V270H67ZM100 248H118V298H67V280H100Z" fill="#eceef2" />
      </>
    ),
  },
  {
    name: "Groups",
    art: (
      <>
        <path d="M17 306V372M36 343H60" {...guide} />
        <Expander y={343} />
        <path d="M76 316H67V363H76M110 316H119V363H110" />
        <circle cx="90" cy="335" r="13" fill="#d4d8e2" />
        <path d="M84 340L94 328H110V358H92Z" fill="#c9cedb" fillOpacity={0.7} strokeWidth={4} />
      </>
    ),
  },
  {
    name: "Revit Links",
    art: (
      <>
        <path d="M17 372V409H60" {...guide} />
        <rect x="66" y="399" width="26" height="17" rx="8" stroke="#8f6a0c" strokeWidth={9} />
        <rect x="95" y="399" width="26" height="17" rx="8" stroke="#8f6a0c" strokeWidth={9} />
        <rect x="66" y="399" width="26" height="17" rx="8" stroke="#e9b62a" strokeWidth={6} />
        <rect x="95" y="399" width="26" height="17" rx="8" stroke="#e9b62a" strokeWidth={6} />
        <path d="M84 408H104" stroke="#c48f17" strokeWidth={7} />
      </>
    ),
  },
];

function BrowserDock() {
  return (
    <>
      <DockHeader>
        <h2>Project Browser - M_Door Tag.rfa</h2>
        <Tool aria-label="Close project browser"><Close /></Tool>
      </DockHeader>
      <Tree>
        {treeItems.map((t, i) => (
          <TreeItem key={t.name} $selected={t.selected}>
            <Glyph w={44} h={22} box={`0 ${108 + 66 * i} 132 66`}>{t.art}</Glyph>
            <span>{t.name}</span>
          </TreeItem>
        ))}
      </Tree>
    </>
  );
}

const DockGap = styled.div`
  height: 5px;
  flex: none;
`;

/* ---------- drawing sheet ---------- */
function Drawing() {
  return (
    <svg viewBox="375 203 1284 755" preserveAspectRatio="xMinYMin meet" fill="none">
      <path d="M896 346.5H1362M1363 346.5A233 233.5 0 0 1 1363 813.5M1361 813.5H896A233.5 233.5 0 0 1 896 346.5" stroke="#000" shapeRendering="crispEdges" />
      <text x="1127" y="694" textAnchor="middle" fontFamily="Roboto, sans-serif" fontSize="332" fill="#0039bd">101</text>
      <rect x="669.5" y="237.5" width="920" height="686" stroke="#0b3f94" />
      {[669, 1589].map((cx) => (
        <g key={cx}>
          <circle cx={cx} cy="581" r="7" fill="#fff" />
          <circle cx={cx} cy="581" r="5" fill="#86b8f0" stroke="#8090a8" strokeWidth="1.5" />
        </g>
      ))}
      <path d="M1584 233A6.5 6.5 0 1 0 1593 233" stroke="#0a4bb0" strokeWidth="2" />
      <path d="M1584 233L1588 231" stroke="#0a4bb0" strokeWidth="2" />
      <path d="M1588 227L1593 231L1588 235Z" fill="#0a4bb0" />
      <path d="M1598.5 227V248" stroke="#0b3f94" />
    </svg>
  );
}

export default function App() {
  const tabs = ["Create", "Insert", "View", "Manage", "Add-Ins", "Enscape™", "Lumion", "Extensions"];
  return (
    <Shell>
      <GlobalStyle />
      <TitleBar>
        <TitleRow>
          <QuickAccess />
          <TitleText>{"Autodesk Revit 2018 - STUDENT VERSION -        M_Door Tag.rfa - Sheet:   -"}</TitleText>
          <Tool aria-label="Expand search" $w={20}>
            <svg width="5" height="8" viewBox="0 0 5 8" aria-hidden="true"><path d="M0 0V8L5 4Z" fill="#333" /></svg>
          </Tool>
          <SearchBox aria-label="Search help" placeholder="Type a keyword or phrase" />
          <SearchIcons />
          <UserName>eng.mostaf</UserName>
        </TitleRow>
      </TitleBar>
      <TabRow>
        <Tab $kind="file">File</Tab>
        {tabs.map((t) => <Tab key={t}>{t}</Tab>)}
        <Tab $kind="active">Modify | Label</Tab>
        <Tool aria-label="Minimize ribbon">
          <Glyph w={32} h={25} box="36 72 96 75">
            <rect x="46" y="97" width="54" height="30" rx="8" fill="#e8e8ec" />
            <path d="M63 117H83L73 106Z" fill="#333" stroke="none" />
          </Glyph>
          <Arrow w={6} color="#111" />
        </Tool>
      </TabRow>
      <Ribbon>
        <SelectPanel />
        <PropertiesPanel />
        <ClipboardPanel />
        <GeometryPanel />
        <ModifyPanel />
        <MeasurePanel />
        <CreatePanel />
        <LabelPanel />
        <FamilyPanel />
      </Ribbon>
      <OptionsBar>Modify | Label</OptionsBar>
      <Workspace>
        <Side>
          <PropertiesDock />
          <DockGap />
          <BrowserDock />
        </Side>
        <Canvas><Drawing /></Canvas>
        <InkMark width="264" height="90" viewBox="116 374 264 90" fill="none" aria-hidden="true">
          <path
            d="M359 402C355 399 352 399 350 401C356 402 358 401 346 397C338 394 332 394 326 393C316 391 310 391 303 388C285 386 265 387 240 386C220 383 200 380 182 379C168 379 155 379 145 384C137 388 130 394 123 398C119 404 120 415 121 421C124 427 134 431 145 436C160 444 180 449 200 456C225 457 255 460 290 459C312 458 330 453 349 449C357 444 364 438 371 433C376 426 375 420 375 416C370 412 364 407 357 401"
            stroke="#1508d2" strokeWidth="2" strokeLinecap="round"
          />
        </InkMark>
      </Workspace>
    </Shell>
  );
}
